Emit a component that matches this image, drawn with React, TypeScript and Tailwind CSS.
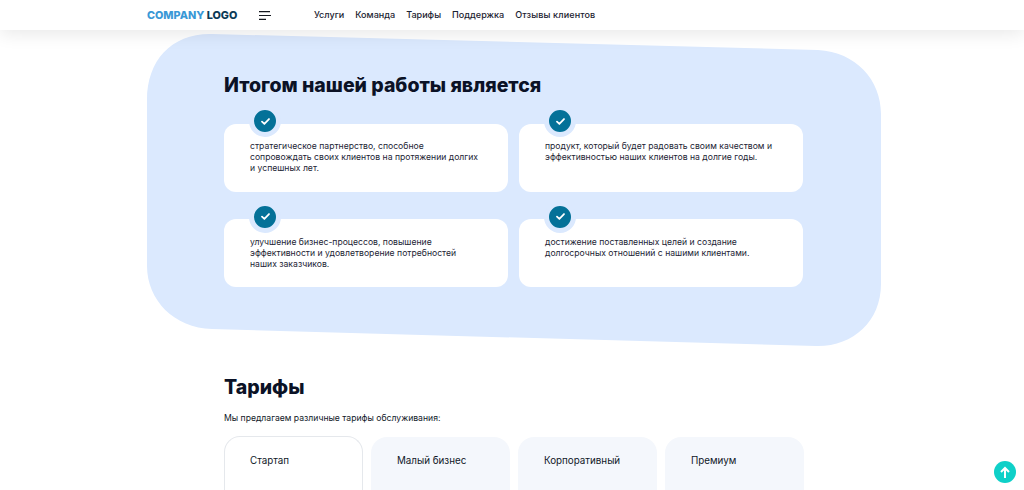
import React from "react";

const items = [
  ["стратегическое партнерство, способное", "сопровождать своих клиентов на протяжении долгих", "и успешных лет."],
  ["продукт, который будет радовать своим качеством и", "эффективностью наших клиентов на долгие годы."],
  ["улучшение бизнес-процессов, повышение", "эффективности и удовлетворение потребностей", "наших заказчиков."],
  ["достижение поставленных целей и создание", "долгосрочных отношений с нашими клиентами."],
];

function Card({ lines }: { lines: string[] }) {
  return (
    <div className="relative h-[68px] rounded-[12px] bg-white pl-[26px] pt-[17.5px]">
      <div className="absolute left-[25px] top-[-18.5px] flex h-[32px] w-[32px] items-center justify-center rounded-full border-[5px] border-[#dbe9fe] bg-[#047198]">
        <svg width="9" height="7" viewBox="0 0 10 8" fill="none">
          <path d="M1 4.2 3.7 6.8 9 1.2" stroke="#fff" strokeWidth="2" strokeLinecap="round" strokeLinejoin="round" />
        </svg>
      </div>
      {lines.map((l) => (
        <div key={l} className="whitespace-nowrap text-[8.65px] leading-[11px] text-[#1c2434]">{l}</div>
      ))}
    </div>
  );
}

function Tariff({ name, active }: { name: string; active?: boolean }) {
  return (
    <div className={`h-[60px] w-[139px] shrink-0 rounded-t-[16px] text-[9.8px] leading-[12px] text-[#101828] ${active ? "border border-b-0 border-[#e5e8ec] bg-white pl-[25px] pt-[18px]" : "mt-[1px] bg-[#f4f7fc] pl-[26px] pt-[18px]"}`}>
      {name}
    </div>
  );
}

export default function App() {
  return (
    <div className="relative h-[490px] w-[1024px] overflow-hidden bg-white font-['Inter',sans-serif]">
      <svg className="absolute left-0 top-0" width="1024" height="490" viewBox="0 0 1024 490">
        <path d="M147 100C147 60 172 33 212 34L818 50C856 52 881 80 881 114V284C881 322 852 347 816 346L212 329C174 328 147 300 147 266Z" fill="#dbe9fe" />
      </svg>

      <header className="relative z-10 flex h-[30px] items-center bg-white pl-[147px] shadow-[0_4px_18px_rgba(0,0,0,0.09)]">
        <div className="mt-[2px] w-[112px] whitespace-nowrap text-[10.8px] font-extrabold leading-none">
          <span className="text-[#3a98d6]">COMPANY </span>
          <span className="text-[#0b3a56]">LOGO</span>
        </div>
        <svg width="12" height="9" viewBox="0 0 12 9" className="mr-[43px]">
          <path d="M0 .7H11M0 4.5H12M0 8.3H7" stroke="#14181f" strokeWidth="1.2" />
        </svg>
        <nav className="flex gap-[11px] whitespace-nowrap text-[9.05px] font-medium leading-[12px] text-[#1b2230]">
          <span>Услуги</span>
          <span>Команда</span>
          <span>Тарифы</span>
          <span>Поддержка</span>
          <span className="tracking-[0.13px]">Отзывы клиентов</span>
        </nav>
      </header>

      <main className="relative pl-[224px] pr-[221px]">
        <h2 className="pt-[43px] text-[19.5px] font-extrabold leading-[24px] text-[#0b1226]">Итогом нашей работы является</h2>
        <div className="mt-[26.5px] grid grid-cols-2 gap-x-[11px] gap-y-[27.5px]">
          {items.map((l) => (
            <Card key={l[0]} lines={l} />
          ))}
        </div>

        <h2 className="mt-[88px] text-[19.5px] font-extrabold leading-[24px] text-[#0b1226]">Тарифы</h2>
        <p className="mt-[13px] text-[8.65px] leading-[12px] text-[#101828]">Мы предлагаем различные тарифы обслуживания:</p>
        <div className="mt-[12px] flex gap-[8px]">
          <Tariff name="Стартап" active />
          <Tariff name="Малый бизнес" />
          <Tariff name="Корпоративный" />
          <Tariff name="Премиум" />
        </div>
      </main>

      <button className="absolute left-[994px] top-[461px] flex h-[22px] w-[22px] items-center justify-center rounded-full bg-[#0fd0c8]">
        <svg width="12" height="13" viewBox="0 0 12 13" fill="none">
          <path d="M6 12V2M2 6l4-4 4 4" stroke="#fff" strokeWidth="2" />
        </svg>
      </button>
    </div>
  );
}
